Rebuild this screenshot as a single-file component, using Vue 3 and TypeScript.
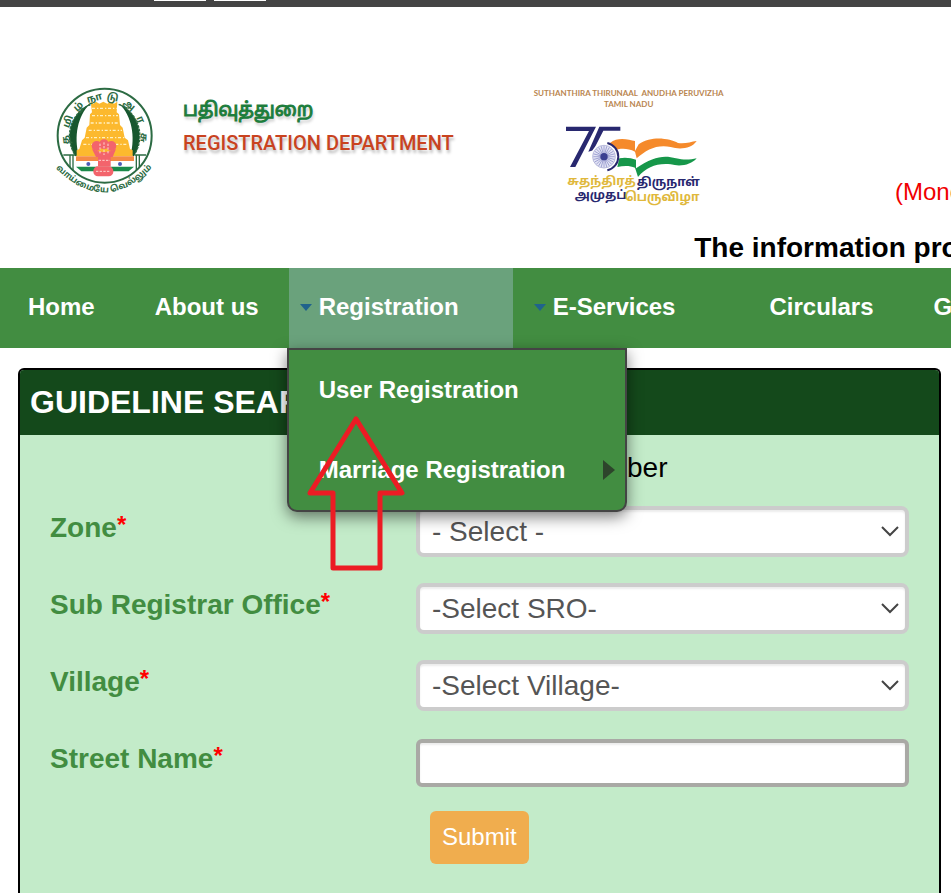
<script setup lang="ts">
import { ref } from 'vue'

interface NavItem {
  label: string
  arrow: boolean
  kind: string
}

interface SelectField {
  id: string
  label: string
  placeholder: string
}

const navItems: NavItem[] = [
  { label: 'Home', arrow: false, kind: 'home' },
  { label: 'About us', arrow: false, kind: 'plain' },
  { label: 'Registration', arrow: true, kind: 'active' },
  { label: 'E-Services', arrow: true, kind: 'wide' },
  { label: 'Circulars', arrow: false, kind: 'plain' },
  { label: 'Guide', arrow: false, kind: 'plain' },
]

const fields: SelectField[] = [
  { id: 'zone', label: 'Zone', placeholder: '- Select -' },
  { id: 'sro', label: 'Sub Registrar Office', placeholder: '-Select SRO-' },
  { id: 'village', label: 'Village', placeholder: '-Select Village-' },
]

const street = ref('')
const spokes = Array.from({ length: 24 }, (_, i) => i * 15)

// Syllables of the seal's name, spread evenly around the ring.
const ringLetters = ['த', 'மி', 'ழ்', 'நா', 'டு', 'அ', 'ர', 'சு'].map((text, i) => ({
  text,
  angle: -96 + i * 27,
}))
</script>

<template>
  <div class="page">
    <div class="topbar"><span class="tab"></span><span class="tab"></span></div>

    <header class="header">
      <div class="brand-row">
        <svg class="emblem" viewBox="0 0 390 390" aria-hidden="true">
          <defs>
            <path id="ring-bottom" d="M56 288 Q196 416 328 286" />
          </defs>
          <circle cx="194" cy="182" r="141" fill="#fff" stroke="#2c6b43" stroke-width="6" />
          <path d="M106 244 C74 190 88 116 150 86 C112 124 102 184 116 240 Z" fill="#17572f" />
          <path d="M282 244 C314 190 300 116 238 86 C276 124 286 184 272 240 Z" fill="#17572f" />
          <path d="M103 236 A103 103 0 0 1 152 88 M236 88 A103 103 0 0 1 285 236" fill="none" stroke="#2c6b43" stroke-width="4" stroke-dasharray="8 3" />
          <path d="M70 240 H106 M284 240 H318 M90 240 V276 M99 240 V288 M289 240 V288 M298 240 V276" stroke="#2c6b43" stroke-width="4" fill="none" />
          <path d="M152 80 L160 86 L168 80 L178 86 L190 80 L202 86 L212 80 L222 86 L232 80 L230 112 L237 118 L240 150 L248 158 L254 188 L264 196 L270 222 L278 226 V244 H110 V226 L118 222 L126 196 L134 188 L140 158 L148 150 L150 118 L156 112 Z" fill="#fcb92e" />
          <g fill="none" stroke="#fff0c0" stroke-width="4" stroke-dasharray="9 6 4 5">
            <path d="M156 100 H230" />
            <path d="M156 122 H234" />
            <path d="M152 144 H238" />
            <path d="M146 166 H246" />
            <path d="M138 188 H252" />
            <path d="M130 208 H264" />
          </g>
          <path d="M108 244 H282 V258 H108 Z" fill="#f58a45" />
          <path d="M108 258 H282 V275 H108 Z" fill="#fff" />
          <path d="M108 275 H282 L266 289 H124 Z" fill="#1b8a4a" />
          <g fill="#4d5bb5"><circle cx="145" cy="267" r="6" /><circle cx="240" cy="267" r="6" /></g>
          <g fill="#f3646c">
            <circle cx="192" cy="208" r="15" /><circle cx="170" cy="213" r="15" /><circle cx="214" cy="213" r="15" />
            <path d="M156 222 Q192 242 228 222 L218 246 H168 Z" />
            <rect x="174" y="244" width="38" height="30" /><rect x="160" y="274" width="60" height="30" rx="14" />
          </g>
          <g stroke="#ffd6d2" stroke-width="3" fill="none">
            <path d="M180 206 V238 M192 202 V240 M204 206 V238 M176 256 H210 M168 289 H212" stroke-dasharray="7 4" />
          </g>
          <text
            v-for="letter in ringLetters"
            :key="letter.text"
            class="ring-text"
            x="194"
            y="74"
            text-anchor="middle"
            :transform="`rotate(${letter.angle} 194 182)`"
          >{{ letter.text }}</text>
          <text class="ring-motto"><textPath href="#ring-bottom" startOffset="50%" text-anchor="middle">வாய்மையே வெல்லும்</textPath></text>
        </svg>

        <div class="titles">
          <div class="title-tamil" lang="ta">பதிவுத்துறை</div>
          <div class="title-english">REGISTRATION DEPARTMENT</div>
        </div>

        <svg class="anniversary" viewBox="0 0 660 420" aria-hidden="true">
          <text class="caption" x="326" y="62" text-anchor="middle">SUTHANTHIRA THIRUNAAL &#160;ANUDHA PERUVIZHA</text>
          <text class="caption" x="326" y="95" text-anchor="middle">TAMIL NADU</text>
          <path d="M138 155 H228 L166 276 H150 L207 168 H138 Z M238 155 H301 V167 H250 L220 226 L205 230 Z" fill="#28286f" />
          <path d="M270 204 C294 184 326 194 345 198 V228 L356 208 C398 180 450 192 474 204 C494 208 512 200 530 198 C514 222 478 224 452 216 C410 208 380 224 350 250 L345 230 C322 218 300 220 280 226 Z" fill="#f58a2b" />
          <path d="M298 250 C318 246 334 250 348 254 V280 C400 244 432 240 468 250 C492 256 512 254 530 250 C514 270 480 276 452 268 C410 264 380 276 354 306 L345 278 C330 272 312 272 292 276 Z" fill="#16974a" />
          <circle cx="254" cy="245" r="41" fill="#fff" />
          <path d="M262 204 A42 42 0 0 1 262 286" fill="none" stroke="#28286f" stroke-width="6" />
          <circle cx="252" cy="245" r="34" fill="#e4e5f5" stroke="#b9bbdc" stroke-width="3" />
          <g stroke="#8387c4" stroke-width="2">
            <path v-for="angle in spokes" :key="angle" d="M252 245 V213" :transform="`rotate(${angle} 252 245)`" />
          </g>
          <circle cx="252" cy="245" r="11" fill="#3b3f91" />
          <text class="slogan gold" x="142" y="330">சுதந்திரத்</text>
          <text class="slogan navy" x="350" y="334">திருநாள்</text>
          <text class="slogan navy" x="164" y="373">அமுதப்</text>
          <text class="slogan gold" x="314" y="378">பெருவிழா</text>
        </svg>

        <div class="hours">(Monday</div>
      </div>
      <div class="notice">The information provided</div>
    </header>

    <nav class="nav">
      <div v-for="item in navItems" :key="item.label" class="nav-item" :class="item.kind">
        <svg v-if="item.arrow" class="nav-arrow" viewBox="0 0 12 7" aria-hidden="true"><path d="M0 0 H12 L6 7 Z" /></svg>
        <a href="#">{{ item.label }}</a>
        <div v-if="item.kind === 'active'" class="menu">
          <a href="#" class="menu-link">User Registration</a>
          <a href="#" class="menu-link">
            Marriage Registration
            <svg class="menu-arrow" viewBox="0 0 12 20" aria-hidden="true"><path d="M0 0 L12 10 L0 20 Z" /></svg>
          </a>
          <svg class="pointer" viewBox="0 0 100 160" aria-hidden="true">
            <path d="M51 5 L97 79 H75 V154 H28 V79 H5 Z" />
          </svg>
        </div>
      </div>
    </nav>

    <main class="card">
      <h1 class="card-title">GUIDELINE SEARCH</h1>
      <form class="form" @submit.prevent>
        <div class="mode">Survey Number</div>
        <div v-for="field in fields" :key="field.id" class="row">
          <label :for="field.id">{{ field.label }}<sup>*</sup></label>
          <div class="control">
            <select :id="field.id"><option>{{ field.placeholder }}</option></select>
            <svg class="chevron" viewBox="0 0 18 12" aria-hidden="true"><path d="M1 2 L9 10 L17 2" /></svg>
          </div>
        </div>
        <div class="row">
          <label for="street">Street Name<sup>*</sup></label>
          <div class="control"><input id="street" v-model="street" type="text" /></div>
        </div>
        <div class="row"><button type="submit">Submit</button></div>
      </form>
    </main>
  </div>
</template>

<style>
body {
  margin: 0;
  background: #fff;
}
</style>

<style scoped>
.page {
  box-sizing: border-box;
  height: 100vh;
  overflow: hidden;
  display: flex;
  flex-direction: column;
  font-family: "Liberation Sans", Arial, sans-serif;
}
.page *,
.page *::before {
  box-sizing: border-box;
}
.topbar {
  display: flex;
  flex: none;
  gap: 8px;
  height: 7px;
  padding-left: 154px;
  background: #444;
}
.tab {
  width: 52px;
  height: 1px;
  background: #fff;
}
.header {
  flex: none;
  padding-top: 68px;
  overflow: hidden;
  white-space: nowrap;
}
.brand-row {
  display: flex;
  padding-left: 40px;
}
.emblem {
  flex: none;
  width: 130px;
  height: 130px;
}
.ring-text {
  font: bold 30px "Noto Sans Tamil", "Noto Sans", sans-serif;
  fill: #2c6b43;
}
.ring-motto {
  font: bold 26px "Noto Sans Tamil", "Noto Sans", sans-serif;
  fill: #2c6b43;
}
.titles {
  flex: none;
  width: 337px;
  margin-left: 13px;
  padding-top: 17px;
}
.title-tamil {
  font: 19px/38px "Noto Sans Tamil", "Noto Sans", sans-serif;
  color: #1d7d3c;
  -webkit-text-stroke: 1px #1d7d3c;
  text-shadow: 1px 3px 3px #bbb;
}
.title-english {
  font: 500 20px/26px Roboto, sans-serif;
  color: #c9431f;
  text-shadow: 1px 3px 3px #bbb;
}
.anniversary {
  flex: none;
  width: 220px;
  height: 140px;
}
.caption {
  font: bold 24px "Lato", sans-serif;
  fill: #b98650;
}
.slogan {
  font: bold 37px "Noto Sans Tamil", "Noto Sans", sans-serif;
}
.gold {
  fill: #e0b83c;
}
.navy {
  fill: #28286f;
}
.hours {
  margin-left: 155px;
  padding-top: 103px;
  font-size: 24px;
  line-height: 28px;
  color: #f00000;
}
.notice {
  margin-left: 73%;
  padding: 17px 0 4px;
  font-size: 28px;
  font-weight: bold;
  line-height: 32px;
  color: #000;
}
.nav {
  display: flex;
  flex: none;
  height: 80px;
  background: #428d41;
}
.nav-item {
  position: relative;
  display: flex;
  flex: none;
  align-items: center;
  padding: 0 30px 2px;
  font-size: 24px;
  font-weight: bold;
}
.nav-item.home {
  padding-left: 28px;
}
.nav-item.active {
  padding-right: 54px;
  background: #6aa27c;
}
.nav-item.wide {
  padding-left: 40px;
  padding-right: 64px;
}
.nav a {
  color: #fff;
  text-decoration: none;
  white-space: nowrap;
}
.nav-arrow {
  flex: none;
  width: 12px;
  height: 7px;
  margin: 0 7px 0 -19px;
  fill: #20638c;
}
.menu {
  position: absolute;
  z-index: 2;
  top: 80px;
  left: -2px;
  width: 340px;
  border: 2px solid #444;
  border-radius: 0 0 10px 10px;
  background: #428d41;
  box-shadow: 0 5px 15px rgba(0, 0, 0, 0.5);
}
.menu-link {
  display: flex;
  align-items: center;
  justify-content: space-between;
  height: 80px;
  padding: 0 10px 0 30px;
}
.menu-arrow {
  width: 12px;
  height: 20px;
  fill: #2d442b;
}
.pointer {
  position: absolute;
  top: 64px;
  left: 16px;
  width: 100px;
  height: 160px;
  fill: none;
  stroke: #ec1c24;
  stroke-width: 5;
  stroke-linejoin: round;
}
.card {
  flex: 1;
  min-height: 0;
  margin: 20px 10px 0 18px;
  border: 2px solid #000;
  border-bottom: 0;
  border-radius: 6px 6px 0 0;
  background: #c3ebc9;
  overflow: hidden;
}
.card-title {
  margin: 0;
  padding: 0 10px;
  background: #14491b;
  color: #fff;
  font-size: 32px;
  line-height: 65px;
}
.form {
  padding: 0 30px;
}
.mode {
  padding: 17px 0 22px 423px;
  font-size: 28px;
  line-height: 32px;
  color: #000;
}
.row {
  display: grid;
  grid-template-columns: 366px 1fr;
  height: 77px;
}
label {
  padding-top: 6px;
  font-size: 28px;
  font-weight: bold;
  line-height: 32px;
  color: #428d41;
}
sup {
  font-size: 24px;
  font-weight: bold;
  line-height: 0;
  vertical-align: 4px;
  color: #f00;
}
.control {
  position: relative;
}
select,
input {
  display: block;
  width: 100%;
  height: 51px;
  padding: 0 12px;
  border: 4px solid #ccc;
  border-radius: 8px;
  background: #fff;
  box-shadow: inset 0 2px 2px rgba(0, 0, 0, 0.08);
  color: #555;
  font: 28px/40px "Liberation Sans", Arial, sans-serif;
  appearance: none;
}
input {
  height: 48px;
  margin-top: 2px;
  border-color: #a9a9a5;
  border-radius: 6px;
}
.chevron {
  position: absolute;
  top: 19px;
  right: 10px;
  width: 18px;
  height: 12px;
  fill: none;
  stroke: #444;
  stroke-width: 2;
  pointer-events: none;
}
button {
  grid-column: 2;
  justify-self: start;
  height: 53px;
  margin: -3px 0 0 14px;
  padding: 0 12px 2px;
  border: 0;
  border-radius: 6px;
  background: #f0ad4e;
  color: #fff;
  font: 24px/28px "Liberation Sans", Arial, sans-serif;
}
</style>
